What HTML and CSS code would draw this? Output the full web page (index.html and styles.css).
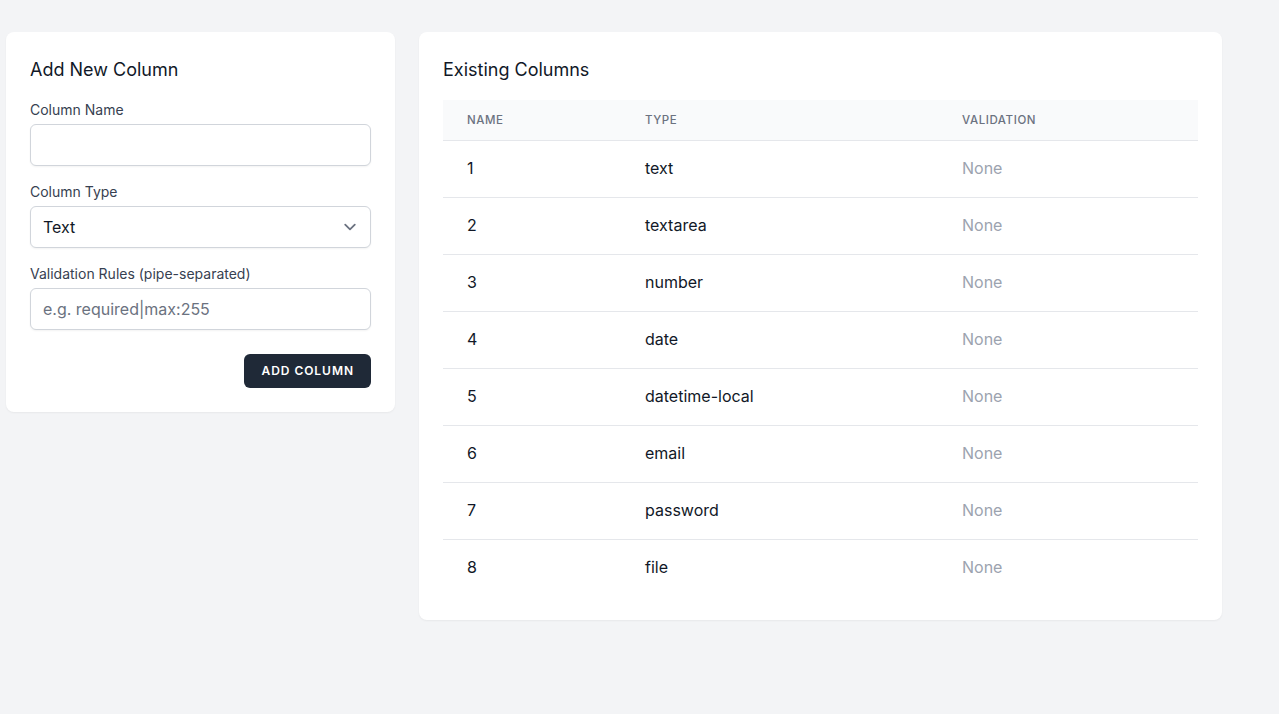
FILE: index.html
```html
<!DOCTYPE html>
<html lang="en">
<head>
<meta charset="utf-8">
<title>Columns</title>
<link rel="stylesheet" href="styles.css">
</head>
<body>
<div class="page">
  <div class="grid">
    <section class="card form-card">
      <h2 class="card-title">Add New Column</h2>
      <form class="form">
        <div class="field">
          <label class="label" for="name">Column Name</label>
          <input class="input" id="name" type="text">
        </div>
        <div class="field">
          <label class="label" for="type">Column Type</label>
          <div class="select-wrap">
            <select class="input select" id="type">
              <option>Text</option>
            </select>
            <svg class="chevron" width="24" height="24" viewBox="0 0 20 20" fill="none"><path d="M6 8l4 4 4-4" stroke="#6b7280" stroke-width="1.5" stroke-linecap="round" stroke-linejoin="round"/></svg>
          </div>
        </div>
        <div class="field">
          <label class="label" for="rules">Validation Rules (pipe-separated)</label>
          <input class="input" id="rules" type="text" placeholder="e.g. required|max:255">
        </div>
        <div class="actions">
          <button type="button" class="btn">Add Column</button>
        </div>
      </form>
    </section>
    <section class="card table-card">
      <h2 class="card-title">Existing Columns</h2>
      <table class="table">
        <colgroup><col class="c1"><col class="c2"><col class="c3"></colgroup>
        <thead>
          <tr><th>Name</th><th>Type</th><th>Validation</th></tr>
        </thead>
        <tbody>
          <tr><td>1</td><td>text</td><td class="muted">None</td></tr>
          <tr><td>2</td><td>textarea</td><td class="muted">None</td></tr>
          <tr><td>3</td><td>number</td><td class="muted">None</td></tr>
          <tr><td>4</td><td>date</td><td class="muted">None</td></tr>
          <tr><td>5</td><td>datetime-local</td><td class="muted">None</td></tr>
          <tr><td>6</td><td>email</td><td class="muted">None</td></tr>
          <tr><td>7</td><td>password</td><td class="muted">None</td></tr>
          <tr><td>8</td><td>file</td><td class="muted">None</td></tr>
        </tbody>
      </table>
    </section>
  </div>
</div>
</body>
</html>
```

FILE: styles.css
```css
* { box-sizing: border-box; }
html, body { margin: 0; padding: 0; }
body {
  background: #f3f4f6;
  font-family: Inter, "Noto Sans", sans-serif;
  color: #111827;
  width: 1279px;
  height: 714px;
  overflow: hidden;
}
.page { padding: 32px 0 0 6px; }
.grid {
  width: 1216px;
  display: grid;
  grid-template-columns: 389px 803px;
  gap: 24px;
  align-items: start;
}
.card {
  background: #fff;
  border-radius: 8px;
  box-shadow: 0 1px 2px 0 rgba(0,0,0,0.05);
  padding: 24px;
}
.card-title {
  margin: 0 0 16px;
  font-size: 18px;
  line-height: 28px;
  font-weight: 400;
  color: #111827;
}
.form { display: flex; flex-direction: column; gap: 16px; margin: 0; }
.field { display: flex; flex-direction: column; gap: 4px; }
.label {
  font-size: 14px;
  line-height: 20px;
  font-weight: 400;
  color: #374151;
}
.input {
  width: 100%;
  height: 42px;
  border: 1px solid #d1d5db;
  border-radius: 6px;
  box-shadow: 0 1px 2px 0 rgba(0,0,0,0.05);
  padding: 8px 12px;
  font-family: inherit;
  font-size: 16px;
  line-height: 24px;
  color: #111827;
  background: #fff;
  outline: none;
}
.input::placeholder { color: #6b7280; }
.select-wrap { position: relative; }
.select { appearance: none; -webkit-appearance: none; padding-right: 40px; }
.chevron { position: absolute; right: 9px; top: 9px; pointer-events: none; }
.actions { display: flex; justify-content: flex-end; margin-top: 8px; }
.btn {
  height: 34px;
  padding: 8px 16px;
  background: #1f2937;
  color: #fff;
  border: 1px solid transparent;
  border-radius: 6px;
  font-family: inherit;
  font-size: 12px;
  line-height: 16px;
  font-weight: 600;
  letter-spacing: 0.08em;
  text-transform: uppercase;
}
.table {
  width: 755px;
  border-collapse: collapse;
  table-layout: fixed;
}
.c1 { width: 178px; }
.c2 { width: 317px; }
.c3 { width: 260px; }
.table thead tr { background: #f9fafb; }
.table th {
  text-align: left;
  padding: 12px 24px;
  font-size: 11.5px;
  line-height: 16px;
  font-weight: 500;
  color: #6b7280;
  text-transform: uppercase;
  letter-spacing: 0.05em;
  border-bottom: 1px solid #e5e7eb;
}
.table td {
  padding: 15px 24px 17px;
  font-size: 16px;
  line-height: 24px;
  color: #111827;
  border-bottom: 1px solid #e5e7eb;
  white-space: nowrap;
}
.table tbody tr:last-child td { border-bottom: none; }
.table td.muted { color: #9ca3af; }
```
